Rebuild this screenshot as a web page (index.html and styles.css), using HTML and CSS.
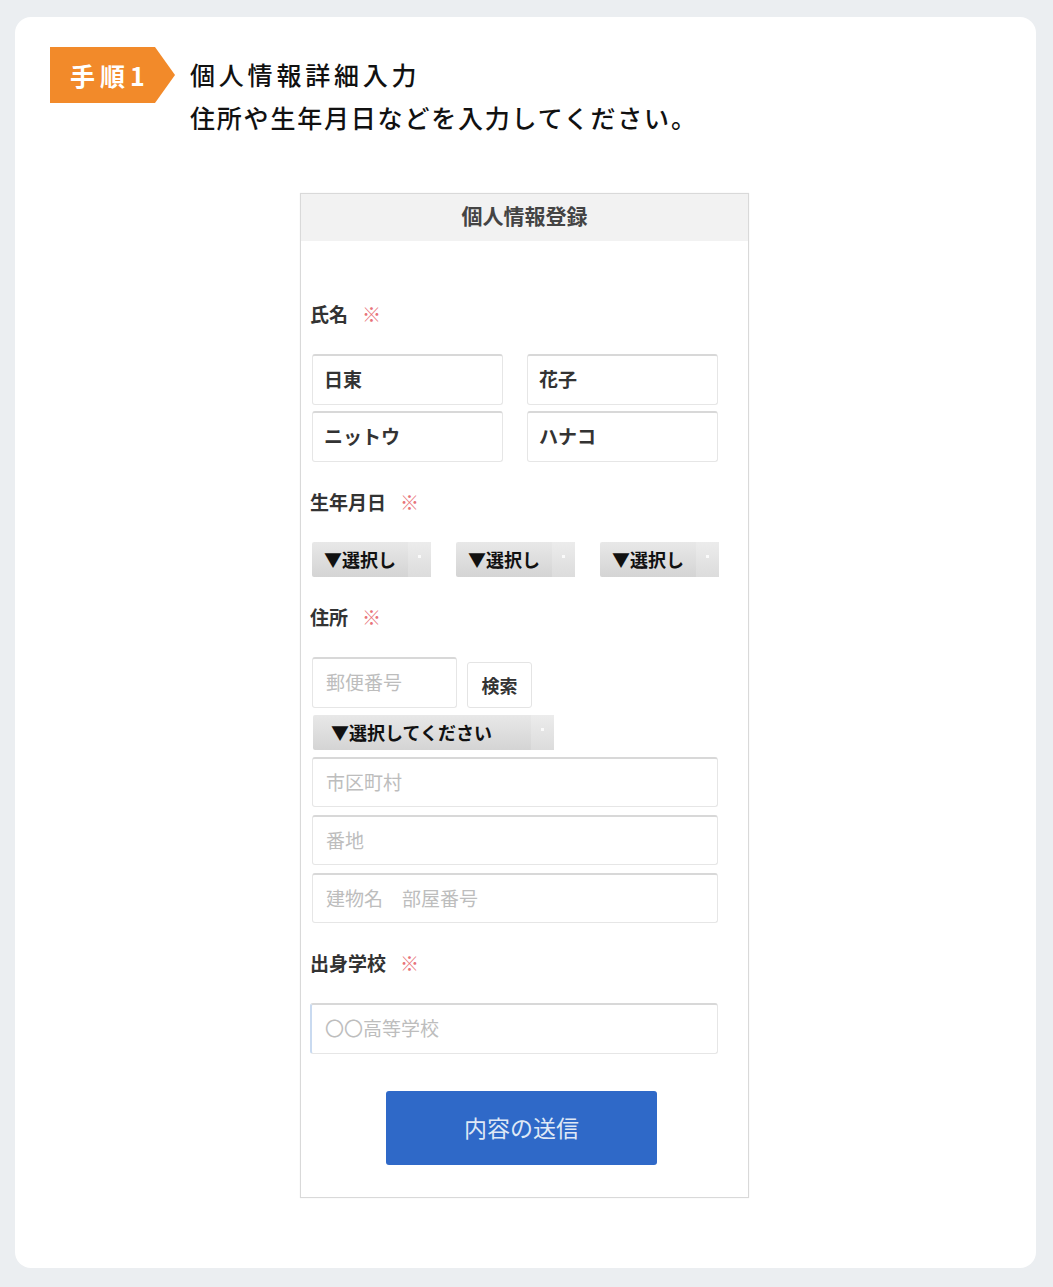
FILE: index.html
```html
<!DOCTYPE html>
<html lang="ja">
<head>
  <meta charset="UTF-8">
  <title>手順1 個人情報詳細入力</title>
  <link rel="stylesheet" href="styles.css">
</head>
<body>
  <div class="card">
    <div class="step">
      <div class="badge">手順1</div>
      <div class="steptext">
        <p class="steptitle">個人情報詳細入力</p>
        <p class="stepdesc">住所や生年月日などを入力してください。</p>
      </div>
    </div>

    <div class="phone">
      <div class="phonehead">個人情報登録</div>
      <div class="phonebody">
        <div class="label lb-name">氏名<span class="req">※</span></div>
        <div class="namegrid">
          <div class="field filled">日東</div>
          <div class="field filled">花子</div>
          <div class="field filled">ニットウ</div>
          <div class="field filled">ハナコ</div>
        </div>

        <div class="label">生年月日<span class="req">※</span></div>
        <div class="selrow">
          <div class="select small">▼選択し<span class="arrow"></span></div>
          <div class="select small">▼選択し<span class="arrow"></span></div>
          <div class="select small">▼選択し<span class="arrow"></span></div>
        </div>

        <div class="label">住所<span class="req">※</span></div>
        <div class="ziprow">
          <div class="field zip">郵便番号</div>
          <div class="searchbtn">検索</div>
        </div>
        <div class="select wide">▼選択してください<span class="arrow"></span></div>
        <div class="field full first">市区町村</div>
        <div class="field full">番地</div>
        <div class="field full">建物名　部屋番号</div>

        <div class="label">出身学校<span class="req">※</span></div>
        <div class="field full school">〇〇高等学校</div>

        <div class="submit">内容の送信</div>
      </div>
    </div>
  </div>
</body>
</html>
```

FILE: styles.css
```css
body {
  margin: 0;
  background: #ebeef1;
  font-family: "Noto Sans CJK JP", "Noto Sans", sans-serif;
  color: #111;
}

.card {
  margin: 17px 17px 0 15px;
  height: 1251px;
  background: #fff;
  border-radius: 16px;
  padding: 30px 0 0 35px;
  box-sizing: border-box;
}

/* step heading */
.step {
  display: flex;
  align-items: flex-start;
}

.badge {
  width: 125px;
  height: 56px;
  background: #f28a2a;
  color: #fff;
  font-weight: bold;
  font-size: 25px;
  letter-spacing: 5px;
  line-height: 56px;
  padding-left: 20px;
  box-sizing: border-box;
  clip-path: polygon(0 0, 105px 0, 125px 50%, 105px 100%, 0 100%);
}

.steptext {
  margin: 6px 0 0 15px;
  font-size: 25px;
  font-weight: 500;
  line-height: 43px;
}

.steptext p {
  margin: 0;
}

.steptitle {
  letter-spacing: 3.8px;
}

.stepdesc {
  letter-spacing: 1.8px;
}

/* phone screenshot */
.phone {
  margin: 54px 0 0 250px;
  width: 449px;
  height: 1005px;
  border: 1px solid #d9d9d9;
  box-sizing: border-box;
  box-shadow: 0 0 1px #e6e6e6;
}

.phonehead {
  height: 47px;
  background: #f2f2f2;
  text-align: center;
  font-size: 21px;
  font-weight: bold;
  color: #444;
  line-height: 42px;
}

.phonebody {
  display: flex;
  flex-direction: column;
  align-items: flex-start;
  padding: 0 0 0 11px;
}

.label {
  margin: 28px 0 0 -2px;
  height: 24px;
  line-height: 24px;
  font-size: 19px;
  font-weight: bold;
  color: #333;
}

.lb-name {
  margin-top: 61px;
}

.req {
  color: #e8737a;
  font-weight: normal;
  margin-left: 14px;
}

.field {
  height: 50px;
  border: 1px solid #e6e6e6;
  border-top: 2px solid #d8d8d8;
  border-radius: 3px;
  box-sizing: border-box;
  padding-left: 13px;
  line-height: 46px;
  font-size: 19px;
  color: #bdbdbd;
  background: #fff;
}

.field.filled {
  color: #333;
  font-weight: bold;
  font-size: 19px;
  padding-left: 11px;
}

.namegrid {
  margin-top: 28px;
  display: grid;
  grid-template-columns: 191px 191px;
  column-gap: 24px;
  row-gap: 6px;
}

.namegrid .field {
  height: 51px;
}

.selrow {
  margin-top: 28px;
  display: flex;
  gap: 25px;
}

.select {
  position: relative;
  height: 35px;
  background: linear-gradient(#e8e8e8, #d4d4d4);
  border-radius: 2px;
  box-sizing: border-box;
  font-size: 18px;
  font-weight: bold;
  line-height: 35px;
  color: #111;
  padding-left: 12px;
}

.select.small {
  width: 119px;
}

.select.wide {
  margin-top: 7px;
  width: 241px;
  padding-left: 18px;
  margin-left: 1px;
}

.arrow {
  position: absolute;
  right: 0;
  top: 0;
  width: 23px;
  height: 35px;
  background: linear-gradient(#ececec, #dcdcdc);
}

.arrow::after {
  content: "";
  position: absolute;
  left: 10px;
  top: 13px;
  width: 3px;
  height: 3px;
  background: #fafafa;
}

.ziprow {
  margin-top: 28px;
  display: flex;
  align-items: flex-end;
  gap: 10px;
}

.field.zip {
  width: 145px;
  height: 51px;
}

.searchbtn {
  width: 65px;
  height: 46px;
  border: 1px solid #e4e4e4;
  border-radius: 3px;
  box-sizing: border-box;
  text-align: center;
  line-height: 44px;
  font-size: 18px;
  font-weight: bold;
  color: #333;
}

.field.full {
  width: 406px;
  margin-top: 8px;
}

.field.first {
  margin-top: 7px;
}

.field.school {
  margin-top: 28px;
  height: 51px;
  border-left: 2px solid #c9daf0;
  margin-left: -2px;
  width: 408px;
}

.submit {
  margin: 37px 0 0 74px;
  width: 271px;
  height: 74px;
  background: #2f69c8;
  border-radius: 3px;
  color: #dfe8f6;
  font-size: 23px;
  text-align: center;
  line-height: 72px;
}
```
